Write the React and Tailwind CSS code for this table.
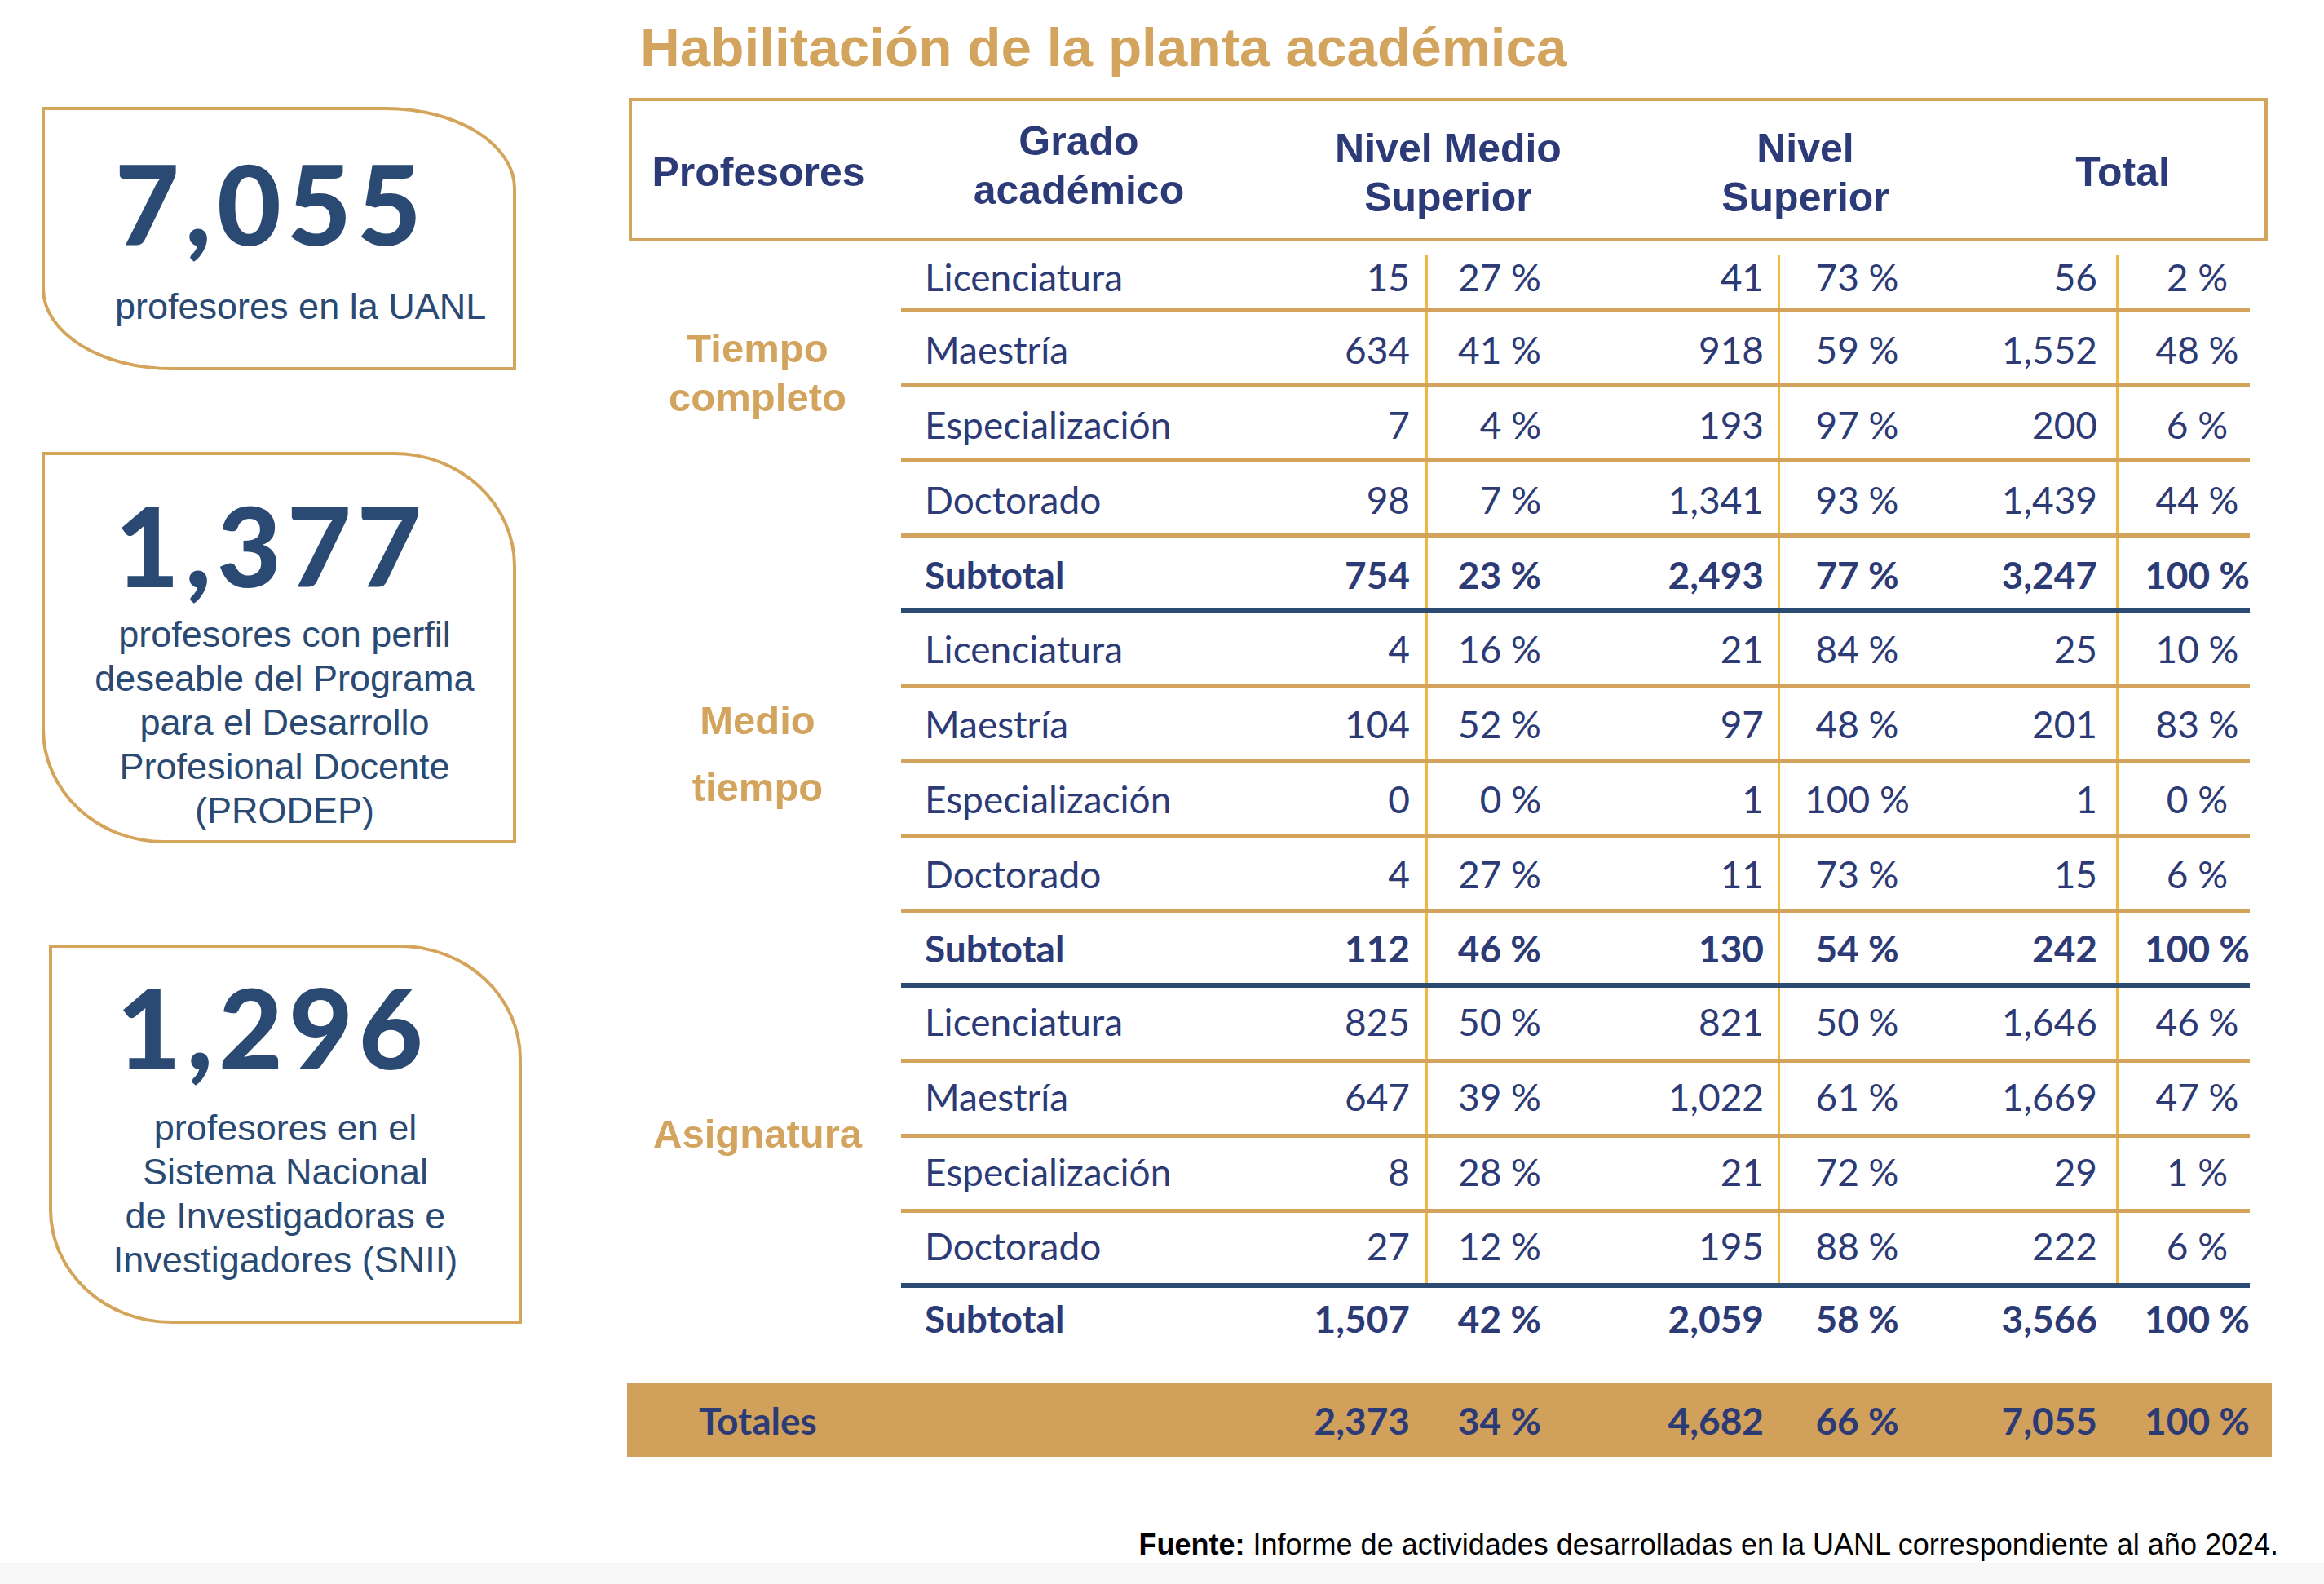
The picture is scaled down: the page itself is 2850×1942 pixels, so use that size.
import React from "react";

const groups = [
  {
    label: ["Tiempo", "completo"],
    labelClass: "pt-[101px] leading-[60px]",
    pad: "pt-[4px]",
    rows: [
      ["Licenciatura", "15", "27 %", "41", "73 %", "56", "2 %"],
      ["Maestría", "634", "41 %", "918", "59 %", "1,552", "48 %"],
      ["Especialización", "7", "4 %", "193", "97 %", "200", "6 %"],
      ["Doctorado", "98", "7 %", "1,341", "93 %", "1,439", "44 %"],
    ],
    subtotal: ["Subtotal", "754", "23 %", "2,493", "77 %", "3,247", "100 %"],
  },
  {
    label: ["Medio", "tiempo"],
    labelClass: "pt-[91px] leading-[82px]",
    pad: "pt-[1px]",
    rows: [
      ["Licenciatura", "4", "16 %", "21", "84 %", "25", "10 %"],
      ["Maestría", "104", "52 %", "97", "48 %", "201", "83 %"],
      ["Especialización", "0", "0 %", "1", "100 %", "1", "0 %"],
      ["Doctorado", "4", "27 %", "11", "73 %", "15", "6 %"],
    ],
    subtotal: ["Subtotal", "112", "46 %", "130", "54 %", "242", "100 %"],
  },
  {
    label: ["Asignatura"],
    labelClass: "pt-[149px] leading-[60px]",
    pad: "pb-[5px]",
    rows: [
      ["Licenciatura", "825", "50 %", "821", "50 %", "1,646", "46 %"],
      ["Maestría", "647", "39 %", "1,022", "61 %", "1,669", "47 %"],
      ["Especialización", "8", "28 %", "21", "72 %", "29", "1 %"],
      ["Doctorado", "27", "12 %", "195", "88 %", "222", "6 %"],
    ],
    subtotal: ["Subtotal", "1,507", "42 %", "2,059", "58 %", "3,566", "100 %"],
  },
];

function Cells({ v, divider, pad }) {
  return (
    <>
      <div className={`w-[248px] flex items-center justify-end pr-[19px] whitespace-nowrap ${pad}`}>{v[1]}</div>
      <div className={divider} />
      <div className={`w-[159px] flex items-center justify-end pr-[20px] whitespace-nowrap ${pad}`}>{v[2]}</div>
      <div className={`w-[270px] flex items-center justify-end pr-[17px] whitespace-nowrap ${pad}`}>{v[3]}</div>
      <div className={divider} />
      <div className={`w-[189px] flex items-center justify-center whitespace-nowrap ${pad}`}>{v[4]}</div>
      <div className={`w-[223px] flex items-center justify-end pr-[23px] whitespace-nowrap ${pad}`}>{v[5]}</div>
      <div className={divider} />
      <div className={`w-[161px] flex items-center justify-center pl-[32px] whitespace-nowrap ${pad}`}>{v[6]}</div>
    </>
  );
}

function Row({ v, bold, line, first, last, pad }) {
  let cls = "h-[92px] border-b-[5px] border-[#D3A35C]";
  if (line === "navy") cls = "h-[92px] border-b-[6px] border-[#2B4A72]";
  if (first) cls = "h-[87px] border-b-[5px] border-[#D3A35C]";
  if (last) cls = "h-[74px]";
  const divider = last
    ? "w-[3px]"
    : first
    ? "w-[3px] mt-[17px] bg-[#F0B840]"
    : "w-[3px] bg-[#F0B840]";
  const p = last ? "" : pad;
  return (
    <div className={`flex w-[1654px] ${cls} ${bold ? "font-bold" : ""}`}>
      <div className={`w-[395px] flex items-center pl-[29px] ${p}`}>{v[0]}</div>
      <Cells v={v} divider={divider} pad={p} />
    </div>
  );
}

function StatBox({ number, lines, className, numClass, textClass }) {
  return (
    <div className={`border-4 border-[#D4A45A] bg-white ${className}`}>
      <div className={`font-['Lato',sans-serif] font-black text-[136px] leading-none tracking-[7px] text-[#2A4A73] ${numClass}`}>
        {number}
      </div>
      <div className={`font-['Liberation_Sans',Arial,sans-serif] text-[45px] leading-[54px] text-[#2A4A73] ${textClass}`}>
        {lines.map((l) => (
          <div key={l}>{l}</div>
        ))}
      </div>
    </div>
  );
}

export default function App() {
  return (
    <div className="w-[2850px] h-[1942px] bg-white flex flex-col overflow-hidden">
      <div className="flex items-start">
        {/* left column */}
        <div className="w-[771px] flex flex-col pt-[131px]">
          <StatBox
            number="7,055"
            lines={["profesores en la UANL"]}
            className="ml-[51px] w-[582px] h-[323px] rounded-tr-[160px_100px] rounded-bl-[160px_100px] pl-[86px] pt-[46px]"
            textClass="mt-[32px]"
          />
          <StatBox
            number="1,377"
            lines={[
              "profesores con perfil",
              "deseable del Programa",
              "para el Desarrollo",
              "Profesional Docente",
              "(PRODEP)",
            ]}
            className="ml-[51px] mt-[100px] w-[582px] h-[480px] rounded-tr-[150px_140px] rounded-bl-[150px_140px] pt-[42px]"
            numClass="pl-[86px]"
            textClass="mt-[15px] text-center pl-[14px]"
          />
          <StatBox
            number="1,296"
            lines={[
              "profesores en el",
              "Sistema Nacional",
              "de Investigadoras e",
              "Investigadores (SNII)",
            ]}
            className="ml-[60px] mt-[124px] w-[580px] h-[465px] rounded-tr-[150px_140px] rounded-bl-[150px_140px] pt-[29px]"
            numClass="pl-[79px]"
            textClass="mt-[29px] text-center"
          />
        </div>

        {/* right column */}
        <div className="flex flex-col">
          <h1 className="ml-[14px] mt-[24px] font-['Liberation_Sans',Arial,sans-serif] font-bold text-[67.5px] leading-[67px] text-[#D3A45E]">
            Habilitación de la planta académica
          </h1>

          <div className="mt-[29px] w-[2010px] h-[176px] border-4 border-[#D4A45A] flex items-stretch font-['Liberation_Sans',Arial,sans-serif] font-bold text-[50px] leading-[60px] text-[#2C3A78] text-center">
            <div className="w-[310px] flex items-center justify-center pt-[6px]">Profesores</div>
            <div className="w-[476px] flex items-center justify-center pb-[10px]">
              <div>Grado<br />académico</div>
            </div>
            <div className="w-[430px] flex items-center justify-center pt-[8px]">
              <div>Nivel Medio<br />Superior</div>
            </div>
            <div className="w-[446px] flex items-center justify-center pt-[8px]">
              <div>Nivel<br />Superior</div>
            </div>
            <div className="w-[332px] flex items-center justify-center pt-[6px]">Total</div>
          </div>

          <div className="flex flex-col font-['Lato',sans-serif] text-[46px] text-[#2C3A76]">
            {groups.map((g, gi) => (
              <div key={gi} className="flex">
                <div className={`w-[334px] pr-[18px] text-center font-['Liberation_Sans',Arial,sans-serif] font-bold text-[49px] text-[#D3A45E] ${g.labelClass}`}>
                  {g.label.map((l) => (
                    <div key={l}>{l}</div>
                  ))}
                </div>
                <div className="flex flex-col">
                  {g.rows.map((r, ri) => (
                    <Row
                      key={ri}
                      v={r}
                      pad={g.pad}
                      first={gi === 0 && ri === 0}
                      line={gi === 2 && ri === 3 ? "navy" : "gold"}
                    />
                  ))}
                  <Row v={g.subtotal} bold pad={g.pad} line={gi < 2 ? "navy" : ""} last={gi === 2} />
                </div>
              </div>
            ))}

            <div className="mt-[43px] -ml-[2px] w-[2017px] h-[90px] bg-[#D1A15B] flex font-bold">
              <div className="w-[336px] flex items-center pl-[88px]">Totales</div>
              <div className="w-[395px]" />
              <Cells v={["", "2,373", "34 %", "4,682", "66 %", "7,055", "100 %"]} divider="w-[3px]" pad="" />
            </div>
          </div>
        </div>
      </div>

      <div className="mt-[86px] pr-[56px] text-right font-['Liberation_Sans',Arial,sans-serif] text-[36px] leading-[44px] text-black">
        <span className="font-bold">Fuente:</span> Informe de actividades desarrolladas en la UANL correspondiente al año 2024.
      </div>
      <div className="mt-auto h-[26px] bg-[#F8F8F8]" />
    </div>
  );
}
